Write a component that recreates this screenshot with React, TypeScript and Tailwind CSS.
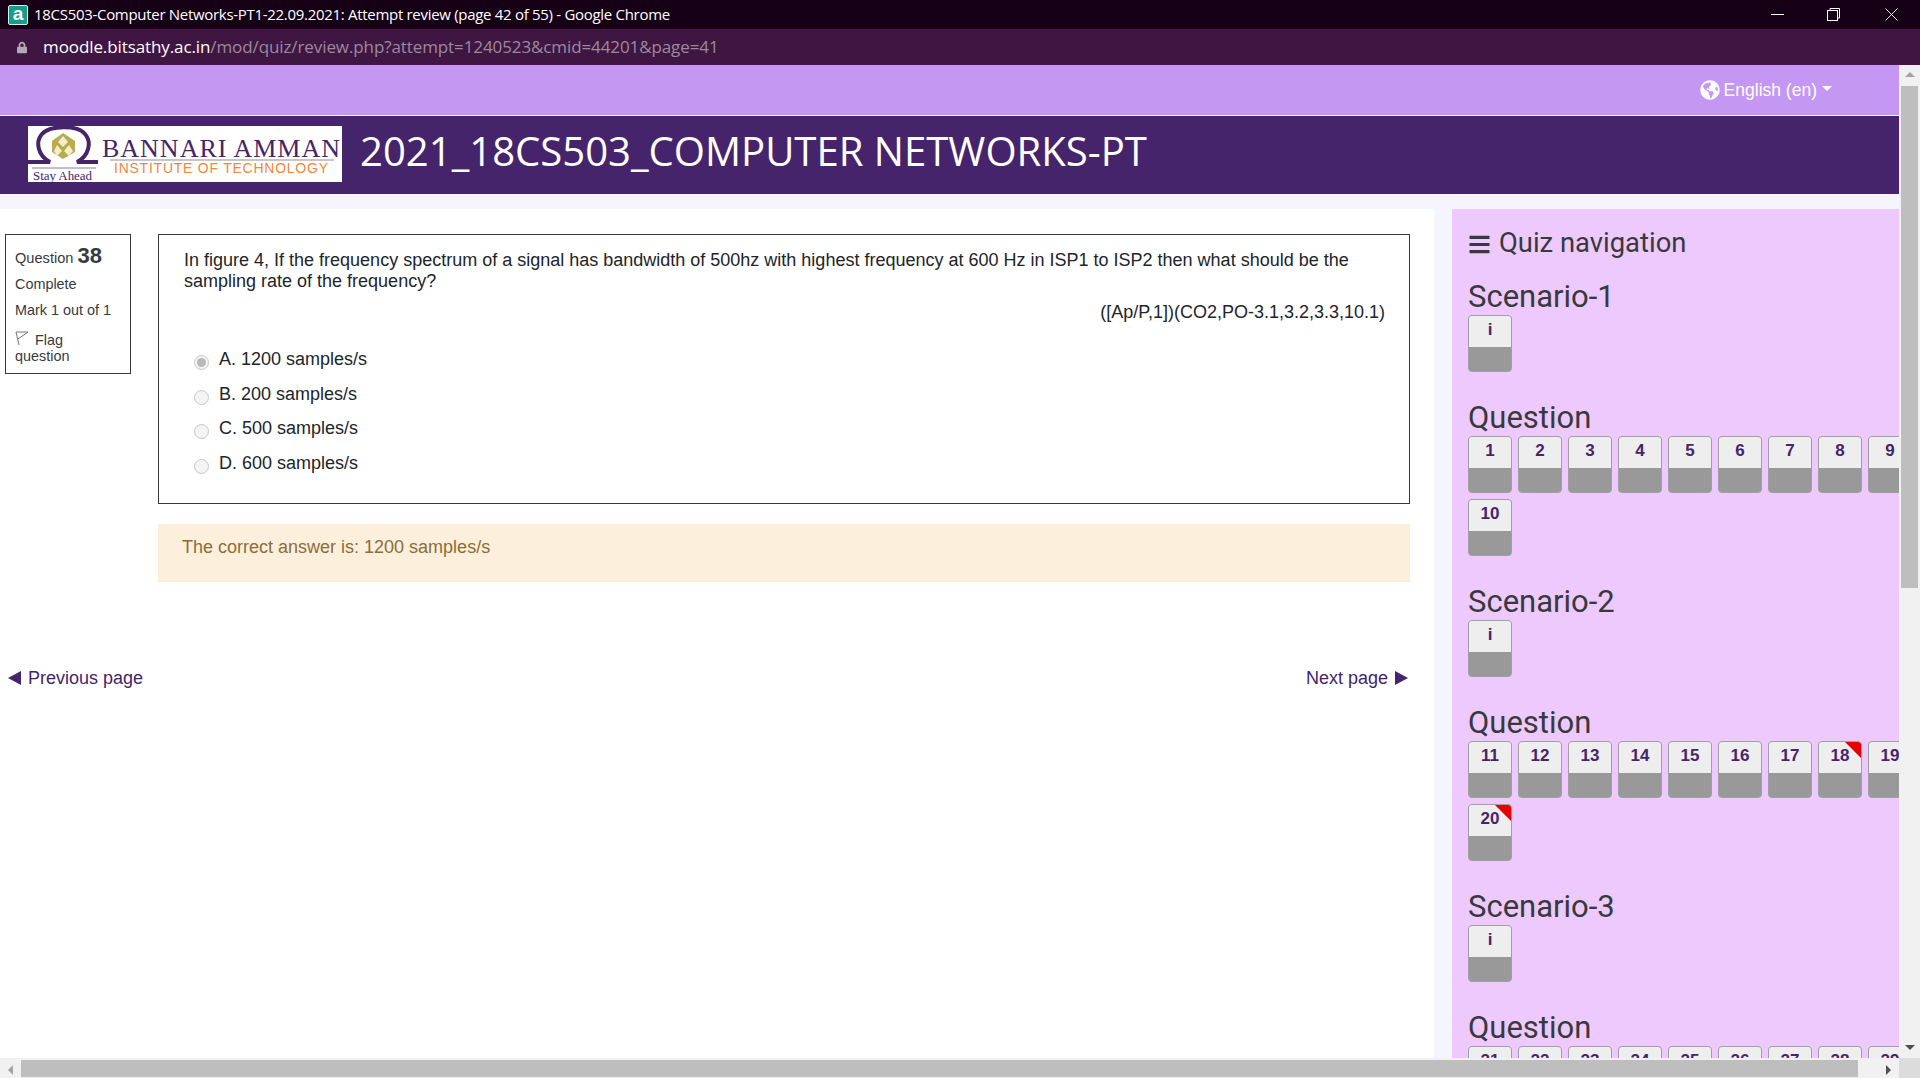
import { FaBars, FaGlobeAmericas, FaLock } from "react-icons/fa";

type TileProps = { label: string; flagged?: boolean };

const Tile = ({ label, flagged }: TileProps) => {
  return (
    <div className="relative w-11 h-[57px] rounded-[4px] border border-[#a0a0a0] bg-[#999999] overflow-hidden">
      <div className="h-[31px] bg-[#eeeeee] text-center text-[17px] leading-[27px] font-bold text-[#46246c]">
        {label}
      </div>
      {flagged && (
        <div className="absolute top-0 right-0 w-4 h-4 bg-[#e60000] [clip-path:polygon(0_0,100%_0,100%_100%)]" />
      )}
    </div>
  );
};

type SectionProps = { title: string; tiles: TileProps[] };

const Section = ({ title, tiles }: SectionProps) => {
  return (
    <div className="mb-[29px]">
      <h3 className="h-[35px] text-[31px] leading-[34px] text-[#373a3c] font-['Roboto',sans-serif]">
        {title}
      </h3>
      <div className="flex flex-wrap gap-x-1.5 gap-y-1.5 w-[460px]">
        {tiles.map((tile) => (
          <Tile key={tile.label} {...tile} />
        ))}
      </div>
    </div>
  );
};

const numbered = (from: number, to: number, flags: number[] = []) =>
  Array.from({ length: to - from + 1 }, (_, i) => ({
    label: String(from + i),
    flagged: flags.includes(from + i),
  }));

const options = [
  { text: "A. 1200 samples/s", checked: true },
  { text: "B. 200 samples/s" },
  { text: "C. 500 samples/s" },
  { text: "D. 600 samples/s" },
];

const Logo = () => (
  <svg viewBox="0 0 314 56" className="w-[314px] h-14 mb-[2px] bg-white block shrink-0">
    <path
      d="M0 36 H22 C10 30 7 16 14 8 C22 -1 50 -1 57 8 C64 16 61 30 49 36 H70"
      fill="none"
      stroke="#46246c"
      strokeWidth="4"
    />
    <polygon points="35,7 47,15 47,26 35,33 24,26 24,15" fill="#b9ab4f" />
    <polygon points="35,10 40,16 35,21 30,16" fill="#f4efc8" />
    <polygon points="29,19 34,25 29,30 26,25" fill="#f4efc8" />
    <polygon points="41,19 45,25 41,30 36,25" fill="#f4efc8" />
    <line x1="4" y1="42" x2="68" y2="42" stroke="#8c7ba0" strokeWidth="1" />
    <text x="5" y="54" fontFamily="Liberation Serif" fontSize="13" fill="#46246c" textLength="59">
      Stay Ahead
    </text>
    <text x="74" y="31" fontFamily="Liberation Serif" fontSize="26" fill="#46246c" textLength="238">
      BANNARI AMMAN
    </text>
    <line x1="82" y1="34" x2="306" y2="34" stroke="#8f8f8f" strokeWidth="1" />
    <text x="86" y="47" fontFamily="Liberation Sans" fontSize="14" fill="#f0873a" textLength="214">
      INSTITUTE OF TECHNOLOGY
    </text>
  </svg>
);

const WindowControls = () => (
  <div className="ml-auto flex items-center h-full text-white">
    <svg width="13" height="2" viewBox="0 0 13 2" className="mr-[43px]">
      <rect width="13" height="1" fill="#fff" />
    </svg>
    <svg width="13" height="13" viewBox="0 0 13 13" className="mr-[45px]" fill="none" stroke="#fff">
      <rect x="0.5" y="2.5" width="10" height="10" />
      <path d="M3 2.5V0.5H12.5V10H10.5" />
    </svg>
    <svg width="13" height="13" viewBox="0 0 13 13" className="mr-[22px]" fill="none" stroke="#e8e0ea">
      <path d="M0.5 0.5L12.5 12.5M12.5 0.5L0.5 12.5" />
    </svg>
  </div>
);

export default function App() {
  return (
    <div className="relative w-[1920px] h-[1078px] overflow-hidden bg-[#f5f5ff] font-['Liberation_Sans',Arial,sans-serif]">
      {/* chrome window bars */}
      <div className="flex items-center h-[29px] bg-[#160016] text-white">
        <div className="ml-2 w-5 h-5 bg-[#12a08a] rounded-[2px] border border-[#d8f0ec] flex items-center justify-center text-[19px] font-bold leading-none pb-[3px] text-white">
          a
        </div>
        <span className="ml-1.5 text-[15px] tracking-[-0.3px] font-['Open_Sans',sans-serif]">
          18CS503-Computer Networks-PT1-22.09.2021: Attempt review (page 42 of 55) - Google Chrome
        </span>
        <WindowControls />
      </div>
      <div className="flex items-center h-9 bg-[#3f1642] border-y border-[#4c0f4f]">
        <FaLock className="ml-[17px] w-[10px] h-[13px] text-[#b0a8b2]" />
        <span className="ml-[16px] text-[17px] tracking-[-0.1px] font-['Open_Sans',sans-serif]">
          <span className="text-white">moodle.bitsathy.ac.in</span>
          <span className="text-[#9b8a9d]">/mod/quiz/review.php?attempt=1240523&amp;cmid=44201&amp;page=41</span>
        </span>
      </div>

      {/* page, right edge stops at the scrollbar */}
      <div className="w-[1899px]">
        <div className="flex items-center justify-end h-[50px] bg-[#c497f2] text-white text-[17.5px] pr-[67px]">
          <FaGlobeAmericas className="w-5 h-5 mr-1" />
          <span>English (en)</span>
          <span className="ml-[5px] mb-[3px] w-0 h-0 border-x-[5px] border-x-transparent border-t-[5px] border-t-white" />
        </div>
        <div className="flex items-center h-[78px] mt-px bg-[#46246c] pl-7">
          <Logo />
          <h1 className="ml-[18px] pb-2 text-white text-[40.1px] leading-none font-['Open_Sans',sans-serif]">
            2021_18CS503_COMPUTER NETWORKS-PT
          </h1>
        </div>

        <div className="flex mt-[15px] h-[850px] overflow-hidden">
          {/* main column */}
          <div className="w-[1434px] shrink-0 bg-white pt-[25px] pl-[5px]">
            <div className="flex">
              <div className="w-[126px] h-[140px] border border-[#373a3c] pt-1 pl-[9px] text-[14.4px] text-[#373a3c] shrink-0">
                <div className="h-[27px] flex items-baseline">
                  <span className="text-[14.6px] mr-1">Question</span>
                  <span className="text-[22px] font-bold">38</span>
                </div>
                <div className="mt-2 leading-[20px]">Complete</div>
                <div className="mt-[6px] leading-[20px]">Mark 1 out of 1</div>
                <div className="mt-[11px] leading-[16px]">
                  <svg width="14" height="15" viewBox="0 0 14 15" className="inline-block mr-[6px] align-[-1px]" fill="none" stroke="#777">
                    <path d="M1 1L4 14M1 1H13L3 8" />
                  </svg>
                  Flag
                  <br />
                  question
                </div>
              </div>

              <div className="ml-[27px] w-[1252px]">
                <div className="h-[270px] border border-[#373a3c] pt-[15px] pl-[25px] pr-[24px] text-[#212529]">
                  <p className="text-[18px] leading-[21px]">
                    In figure 4, If the frequency spectrum of a signal has bandwidth of 500hz with highest frequency at 600 Hz in ISP1 to ISP2 then what should be the sampling rate of the frequency?
                  </p>
                  <p className="mt-2 text-right text-[18px] leading-[24px]">
                    ([Ap/P,1])(CO2,PO-3.1,3.2,3.3,10.1)
                  </p>
                  <div className="mt-[23px] flex flex-col">
                    {options.map((option) => (
                      <div key={option.text} className="flex h-[34.7px] text-[18px] leading-[24px]">
                        <span className="ml-[10px] mr-[10px] mt-2 w-[15px] h-[15px] rounded-full border border-[#c8c8c8] bg-[#f4f4f4] flex items-center justify-center">
                          {option.checked && <span className="w-[9px] h-[9px] rounded-full bg-[#b8b8b8]" />}
                        </span>
                        {option.text}
                      </div>
                    ))}
                  </div>
                </div>
                <div className="mt-5 h-[58px] bg-[#fcefdc] pl-6 pt-[11px] text-[18px] leading-[24px] text-[#8a6d3b]">
                  The correct answer is: 1200 samples/s
                </div>
              </div>
            </div>

            <div className="flex justify-between w-[1403px] mt-[84px] pl-[3px] text-[18px] leading-[24px] text-[#46246c]">
              <span className="flex items-center gap-[7px]">
                <span className="w-0 h-0 border-y-[7px] border-y-transparent border-r-[13px] border-r-[#46246c]" />
                Previous page
              </span>
              <span className="flex items-center gap-[7px]">
                Next page
                <span className="w-0 h-0 border-y-[7px] border-y-transparent border-l-[13px] border-l-[#46246c]" />
              </span>
            </div>
          </div>

          {/* quiz navigation */}
          <div className="ml-[18px] w-[447px] bg-[#eec9fd] overflow-hidden pl-4 pt-[15px] shrink-0">
            <div className="flex items-center h-10 mb-4 text-[#373a3c]">
              <FaBars className="w-[23px] h-[23px]" />
              <span className="ml-2 text-[27.4px] font-['Roboto',sans-serif]">Quiz navigation</span>
            </div>
            <Section title="Scenario-1" tiles={[{ label: "i" }]} />
            <Section title="Question" tiles={numbered(1, 10)} />
            <Section title="Scenario-2" tiles={[{ label: "i" }]} />
            <Section title="Question" tiles={numbered(11, 20, [18, 20])} />
            <Section title="Scenario-3" tiles={[{ label: "i" }]} />
            <Section title="Question" tiles={numbered(21, 30)} />
          </div>
        </div>
      </div>

      {/* vertical scrollbar */}
      <div className="absolute top-[65px] right-0 w-[21px] h-[993px] bg-[#f1f1f1]">
        <div className="absolute top-[7px] left-[6px] w-0 h-0 border-x-[5px] border-x-transparent border-b-[5px] border-b-[#a3a3a3]" />
        <div className="absolute top-[21px] left-[2px] w-[17px] h-[502px] bg-[#bebebe]" />
        <div className="absolute bottom-[8px] left-[6px] w-0 h-0 border-x-[5px] border-x-transparent border-t-[5px] border-t-[#505050]" />
      </div>
      {/* horizontal scrollbar */}
      <div className="absolute bottom-0 left-0 w-full h-5 bg-[#f1f1f1]">
        <div className="absolute top-[7px] left-2 w-0 h-0 border-y-[5px] border-y-transparent border-r-[5px] border-r-[#a3a3a3]" />
        <div className="absolute top-[2px] left-[21px] w-[1837px] h-[17px] bg-[#bebebe]" />
        <div className="absolute top-[7px] left-[1886px] w-0 h-0 border-y-[5px] border-y-transparent border-l-[5px] border-l-[#505050]" />
        <div className="absolute top-0 right-0 w-[21px] h-full bg-[#dcdcdc]" />
      </div>
    </div>
  );
}
